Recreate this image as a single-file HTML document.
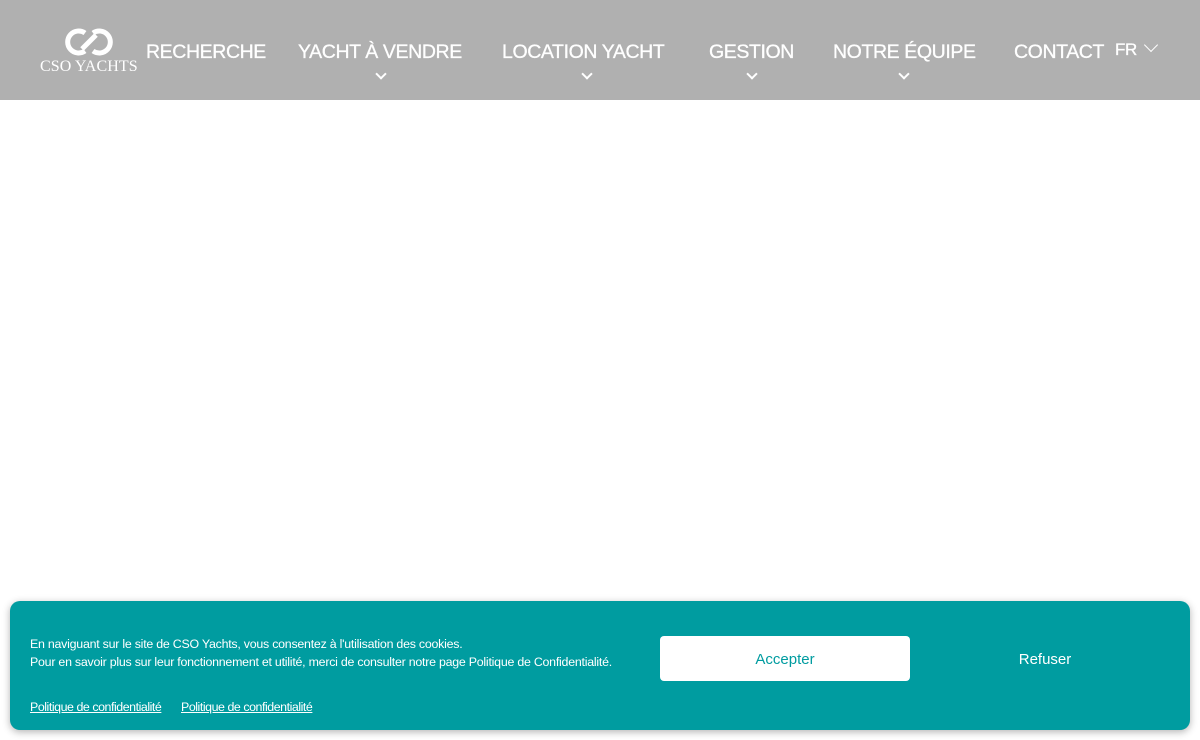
<!DOCTYPE html>
<html><head><meta charset="utf-8"><style>
*{margin:0;padding:0;box-sizing:border-box}
body{width:1200px;height:740px;background:#fff;font-family:"Liberation Sans",sans-serif;position:relative;overflow:hidden}
.hdr{position:absolute;left:0;top:0;width:1200px;height:100px;background:#b0b0b0}
.nav{position:absolute;top:41px;color:#fff;font-size:19.5px;white-space:nowrap;letter-spacing:-0.4px;-webkit-text-stroke:0.3px #fff}
.chev{position:absolute;top:70px;width:8px;height:8px;border-right:2px solid #fff;border-bottom:2px solid #fff;transform:rotate(45deg)}
.logo{position:absolute;left:40px;top:58px;color:#fff;font-family:"Liberation Serif",serif;font-size:16px;letter-spacing:0.1px}
.ban{position:absolute;left:10px;top:601px;width:1180px;height:129px;background:#009ca0;border-radius:10px;box-shadow:0 2px 8px rgba(0,0,0,.3);color:#fff}
.t{position:absolute;left:20px;font-size:12.4px;letter-spacing:-0.24px;white-space:nowrap}
.acc{position:absolute;left:650px;top:35px;width:250px;height:45px;background:#fff;border-radius:4px;color:#009ca0;font-size:15px;text-align:center;line-height:47px}
.ref{position:absolute;left:910px;top:35px;width:250px;height:45px;font-size:15px;text-align:center;line-height:47px}
</style></head><body>
<div class="hdr">
<svg style="position:absolute;left:63px;top:27px" width="52" height="30" viewBox="0 0 52 30"><g fill="none" stroke="#fff" stroke-width="5"><path d="M22 6 A11 11 0 1 0 22 24"/><path d="M30 24 A11 11 0 1 0 30 6"/><path d="M19 22 L33 8"/></g></svg>
<div class="logo">CSO YACHTS</div>
<div class="nav" style="left:146px">RECHERCHE</div>
<div class="nav" style="left:298px">YACHT À VENDRE</div><div class="chev" style="left:377px"></div>
<div class="nav" style="left:502px">LOCATION YACHT</div><div class="chev" style="left:583px"></div>
<div class="nav" style="left:709px">GESTION</div><div class="chev" style="left:748px"></div>
<div class="nav" style="left:833px">NOTRE ÉQUIPE</div><div class="chev" style="left:900px"></div>
<div class="nav" style="left:1014px">CONTACT</div>
<div class="nav" style="left:1115px;top:40px;font-size:17px">FR</div>
<div style="position:absolute;left:1146px;top:40px;width:10px;height:10px;border-right:1.5px solid #fff;border-bottom:1.5px solid #fff;transform:rotate(45deg)"></div>
</div>
<div class="ban">
<div class="t" style="top:36px">En naviguant sur le site de CSO Yachts, vous consentez à l'utilisation des cookies.</div>
<div class="t" style="top:54px">Pour en savoir plus sur leur fonctionnement et utilité, merci de consulter notre page Politique de Confidentialité.</div>
<div class="t" style="top:99px;text-decoration:underline;letter-spacing:-0.45px">Politique de confidentialité</div>
<div class="t" style="top:99px;left:171px;text-decoration:underline;letter-spacing:-0.45px">Politique de confidentialité</div>
<div class="acc">Accepter</div>
<div class="ref">Refuser</div>
</div>
</body></html>
